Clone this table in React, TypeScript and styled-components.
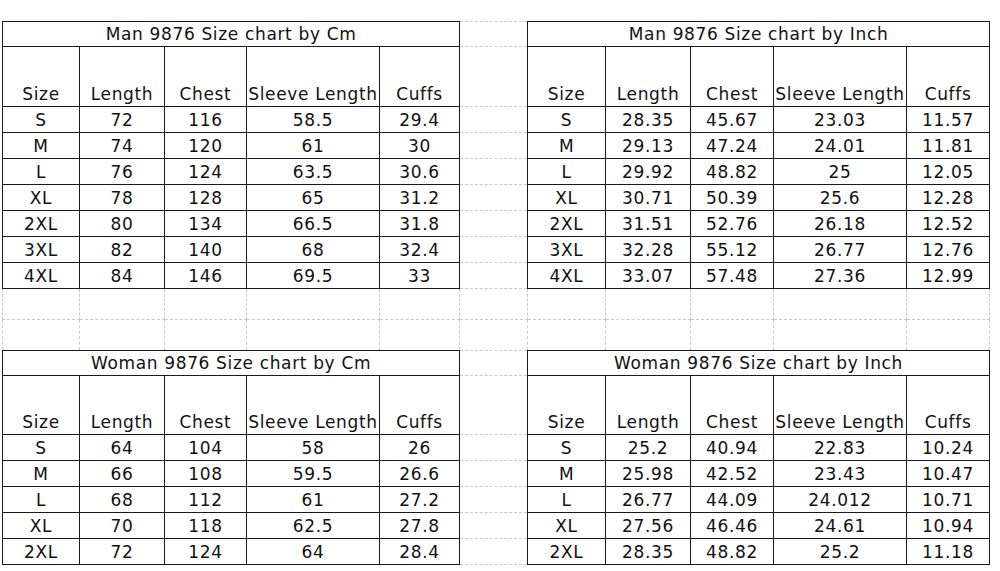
import React from 'react';
import styled, { createGlobalStyle } from 'styled-components';

const GlobalStyle = createGlobalStyle`
    html, body {
        margin: 0;
        padding: 0;
        background: #fff;
    }
`;

const Page = styled.div`
    padding: 21px 0 0 2px;
    width: 1000px;
    height: 571px;
    box-sizing: border-box;
    overflow: hidden;
`;

const Sheet = styled.table`
    border-collapse: collapse;
    table-layout: fixed;
    width: 987px;
    font-family: 'DejaVu Sans', Verdana, sans-serif;
    font-size: 17px;
    color: #111;
`;

const Row = styled.tr<{ $h: number }>`
    height: ${(p) => p.$h}px;
`;

const Cell = styled.td<{ $solid?: boolean }>`
    padding: 0 0 1px;
    border: 1px ${(p) => (p.$solid ? 'solid #1a1a1a' : 'dashed #c9c9c9')};
    text-align: center;
    vertical-align: bottom;
    white-space: nowrap;
    overflow: visible;
    line-height: 22px;
    letter-spacing: 0.65px;
`;

const widths = [77, 85, 82, 133, 80, 68, 78, 85, 83, 133, 83];
const headers = ['Size', 'Length', 'Chest', 'Sleeve Length', 'Cuffs'];

type Line = string[];

const manCm: Line[] = [
    ['S', '72', '116', '58.5', '29.4'],
    ['M', '74', '120', '61', '30'],
    ['L', '76', '124', '63.5', '30.6'],
    ['XL', '78', '128', '65', '31.2'],
    ['2XL', '80', '134', '66.5', '31.8'],
    ['3XL', '82', '140', '68', '32.4'],
    ['4XL', '84', '146', '69.5', '33'],
];

const manInch: Line[] = [
    ['S', '28.35', '45.67', '23.03', '11.57'],
    ['M', '29.13', '47.24', '24.01', '11.81'],
    ['L', '29.92', '48.82', '25', '12.05'],
    ['XL', '30.71', '50.39', '25.6', '12.28'],
    ['2XL', '31.51', '52.76', '26.18', '12.52'],
    ['3XL', '32.28', '55.12', '26.77', '12.76'],
    ['4XL', '33.07', '57.48', '27.36', '12.99'],
];

const womanCm: Line[] = [
    ['S', '64', '104', '58', '26'],
    ['M', '66', '108', '59.5', '26.6'],
    ['L', '68', '112', '61', '27.2'],
    ['XL', '70', '118', '62.5', '27.8'],
    ['2XL', '72', '124', '64', '28.4'],
];

const womanInch: Line[] = [
    ['S', '25.2', '40.94', '22.83', '10.24'],
    ['M', '25.98', '42.52', '23.43', '10.47'],
    ['L', '26.77', '44.09', '24.012', '10.71'],
    ['XL', '27.56', '46.46', '24.61', '10.94'],
    ['2XL', '28.35', '48.82', '25.2', '11.18'],
];

const Gap = () => <Cell />;

const TitleRow = ({ left, right }: { left: string; right: string }) => (
    <Row $h={25}>
        <Cell $solid colSpan={5}>{left}</Cell>
        <Gap />
        <Cell $solid colSpan={5}>{right}</Cell>
    </Row>
);

const HeaderRow = ({ h }: { h: number }) => (
    <Row $h={h}>
        {headers.map((t) => <Cell key={'l' + t} $solid>{t}</Cell>)}
        <Gap />
        {headers.map((t) => <Cell key={'r' + t} $solid>{t}</Cell>)}
    </Row>
);

const DataRows = ({ left, right }: { left: Line[]; right: Line[] }) => (
    <>
        {left.map((line, i) => (
            <Row $h={26} key={line[0]}>
                {line.map((v, j) => <Cell key={j} $solid>{v}</Cell>)}
                <Gap />
                {right[i].map((v, j) => <Cell key={'r' + j} $solid>{v}</Cell>)}
            </Row>
        ))}
    </>
);

const EmptyRow = ({ h }: { h: number }) => (
    <Row $h={h}>
        {widths.map((_, i) => <Cell key={i} />)}
    </Row>
);

const App: React.FC = () => {
    return (
        <Page>
            <GlobalStyle />
            <Sheet>
                <colgroup>
                    {widths.map((w, i) => <col key={i} style={{ width: w }} />)}
                </colgroup>
                <tbody>
                    <TitleRow left="Man 9876 Size chart by Cm" right="Man 9876 Size chart by Inch" />
                    <HeaderRow h={60} />
                    <DataRows left={manCm} right={manInch} />
                    <EmptyRow h={31} />
                    <EmptyRow h={31} />
                    <TitleRow left="Woman 9876 Size chart by Cm" right="Woman 9876 Size chart by Inch" />
                    <HeaderRow h={59} />
                    <DataRows left={womanCm} right={womanInch} />
                </tbody>
            </Sheet>
        </Page>
    );
};

export default App;
